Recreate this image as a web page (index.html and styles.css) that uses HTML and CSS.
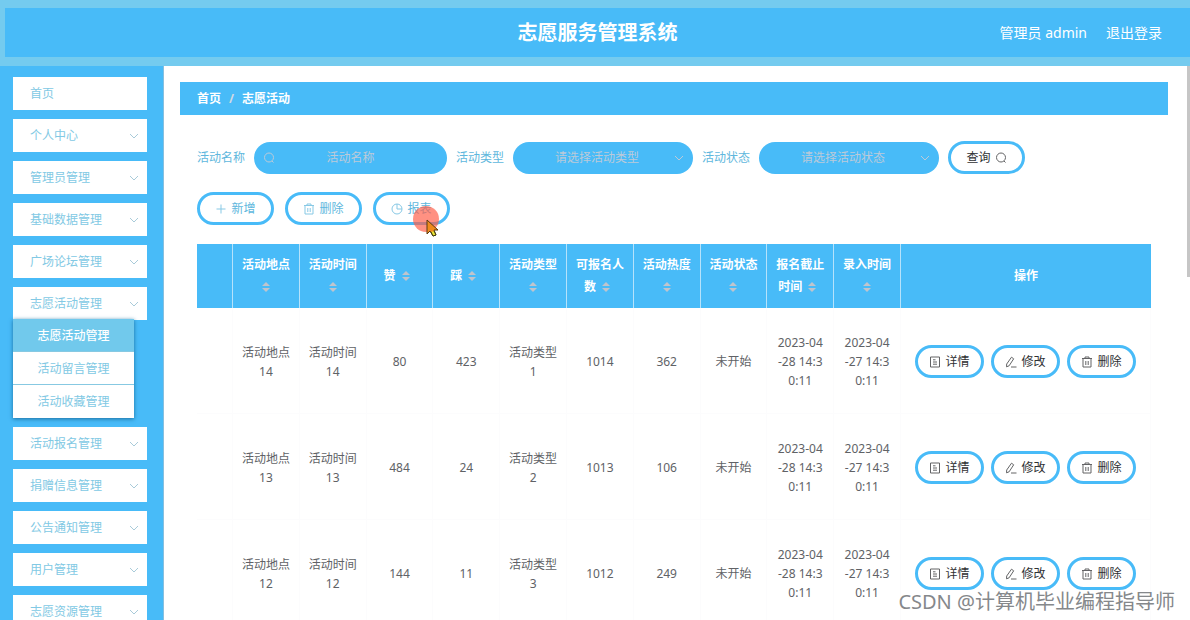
FILE: index.html
```html
<!DOCTYPE html>
<html lang="zh-CN">
<head>
<meta charset="utf-8">
<title>志愿服务管理系统</title>
<link rel="stylesheet" href="styles.css">
</head>
<body>
<svg class="defs" aria-hidden="true">
  <symbol id="search" viewBox="0 0 12 12"><circle cx="6" cy="5.5" r="4.5"/><path d="M9 9l1.500 1.500"/></symbol>
  <symbol id="down" viewBox="0 0 12 12"><path d="M2 4L6 8l4-4"/></symbol>
  <symbol id="plus" viewBox="0 0 12 12"><path d="M6 1.500v9M1.500 6h9"/></symbol>
  <symbol id="trash" viewBox="0 0 12 12"><path d="M1 2.500h10M4 2.500v-1.500h4v1.500M2 2.500v8.500h8V2.500M4.800 5v4M7.200 5v4"/></symbol>
  <symbol id="pie" viewBox="0 0 12 12"><circle cx="6" cy="6" r="5"/><path d="M6 1v5h5"/></symbol>
  <symbol id="doc" viewBox="0 0 12 12"><path d="M1.500 1h9v10h-9zM4 3.800h2.500M4 6h4M4 8.200h4"/></symbol>
  <symbol id="edit" viewBox="0 0 12 12"><path d="M6.500 1.200l2.200 1.600-4.600 7-2.600 1 .2-2.800zM6 11h5.500"/></symbol>
  <symbol id="sort" viewBox="0 0 20 12"><path d="M10 1l4 4H6zM6 7h8l-4 4z"/></symbol>
</svg>

<header class="topbar">
  <h1 class="topbar-title">志愿服务管理系统</h1>
  <div class="topbar-user"><span>管理员 admin</span><a href="#" class="logout">退出登录</a></div>
</header>

<div class="layout">
  <nav class="sidebar">
    <a class="menu-item" href="#">首页</a>
    <button class="menu-item">个人中心<svg class="icon"><use href="#down"/></svg></button>
    <button class="menu-item">管理员管理<svg class="icon"><use href="#down"/></svg></button>
    <button class="menu-item">基础数据管理<svg class="icon"><use href="#down"/></svg></button>
    <button class="menu-item">广场论坛管理<svg class="icon"><use href="#down"/></svg></button>
    <div class="menu-group">
      <button class="menu-item">志愿活动管理<svg class="icon"><use href="#down"/></svg></button>
      <div class="submenu">
        <a class="submenu-item active" href="#">志愿活动管理</a>
        <a class="submenu-item" href="#">活动留言管理</a>
        <a class="submenu-item" href="#">活动收藏管理</a>
      </div>
    </div>
    <button class="menu-item">活动报名管理<svg class="icon"><use href="#down"/></svg></button>
    <button class="menu-item">捐赠信息管理<svg class="icon"><use href="#down"/></svg></button>
    <button class="menu-item">公告通知管理<svg class="icon"><use href="#down"/></svg></button>
    <button class="menu-item">用户管理<svg class="icon"><use href="#down"/></svg></button>
    <button class="menu-item">志愿资源管理<svg class="icon"><use href="#down"/></svg></button>
  </nav>

  <main class="main">
    <div class="breadcrumb"><a href="#">首页</a><span class="slash">/</span><span>志愿活动</span></div>
    <div class="content">
      <form class="filters">
        <label for="name">活动名称</label>
        <div class="field field-text"><svg class="icon"><use href="#search"/></svg><input id="name" type="text" placeholder="活动名称"></div>
        <label for="type">活动类型</label>
        <div class="field"><select id="type"><option>请选择活动类型</option></select><svg class="icon"><use href="#down"/></svg></div>
        <label for="state">活动状态</label>
        <div class="field"><select id="state"><option>请选择活动状态</option></select><svg class="icon"><use href="#down"/></svg></div>
        <button type="button" class="btn dark">查询<svg class="icon"><use href="#search"/></svg></button>
      </form>
      <div class="toolbar">
        <button class="btn"><svg class="icon"><use href="#plus"/></svg>新增</button>
        <button class="btn"><svg class="icon"><use href="#trash"/></svg>删除</button>
        <button class="btn report"><svg class="icon"><use href="#pie"/></svg>报表
          <svg class="pointer" viewBox="0 0 28 32" aria-hidden="true"><circle cx="13" cy="13" r="13" fill="#ff5d47" fill-opacity=".68"/><path d="M14 14v14l3-3 3 5 3-1-2-5h4z" fill="#f08a1c" stroke="#5a3a10"/><path d="M18 26l2 4 3-1-2-4" fill="#e8e337" stroke="#3c3c10"/></svg>
        </button>
      </div>
      <table class="grid">
        <colgroup><col class="col-check"><col span="10"><col class="col-ops"></colgroup>
        <thead>
          <tr>
            <th></th>
            <th>活动地点<svg class="sort"><use href="#sort"/></svg></th>
            <th>活动时间<svg class="sort"><use href="#sort"/></svg></th>
            <th>赞<svg class="sort"><use href="#sort"/></svg></th>
            <th>踩<svg class="sort"><use href="#sort"/></svg></th>
            <th>活动类型<svg class="sort"><use href="#sort"/></svg></th>
            <th>可报名人数<svg class="sort"><use href="#sort"/></svg></th>
            <th>活动热度<svg class="sort"><use href="#sort"/></svg></th>
            <th>活动状态<svg class="sort"><use href="#sort"/></svg></th>
            <th>报名截止时间<svg class="sort"><use href="#sort"/></svg></th>
            <th>录入时间<svg class="sort"><use href="#sort"/></svg></th>
            <th>操作</th>
          </tr>
        </thead>
        <tbody>
          <tr>
            <td></td><td>活动地点14</td><td>活动时间14</td><td>80</td><td>423</td><td>活动类型1</td><td>1014</td><td>362</td><td>未开始</td>
            <td class="date">2023-04-28 14:30:11</td><td class="date">2023-04-27 14:30:11</td>
            <td><div class="ops"><button class="btn dark"><svg class="icon"><use href="#doc"/></svg>详情</button><button class="btn dark"><svg class="icon"><use href="#edit"/></svg>修改</button><button class="btn dark"><svg class="icon"><use href="#trash"/></svg>删除</button></div></td>
          </tr>
          <tr>
            <td></td><td>活动地点13</td><td>活动时间13</td><td>484</td><td>24</td><td>活动类型2</td><td>1013</td><td>106</td><td>未开始</td>
            <td class="date">2023-04-28 14:30:11</td><td class="date">2023-04-27 14:30:11</td>
            <td><div class="ops"><button class="btn dark"><svg class="icon"><use href="#doc"/></svg>详情</button><button class="btn dark"><svg class="icon"><use href="#edit"/></svg>修改</button><button class="btn dark"><svg class="icon"><use href="#trash"/></svg>删除</button></div></td>
          </tr>
          <tr>
            <td></td><td>活动地点12</td><td>活动时间12</td><td>144</td><td>11</td><td>活动类型3</td><td>1012</td><td>249</td><td>未开始</td>
            <td class="date">2023-04-28 14:30:11</td><td class="date">2023-04-27 14:30:11</td>
            <td><div class="ops"><button class="btn dark"><svg class="icon"><use href="#doc"/></svg>详情</button><button class="btn dark"><svg class="icon"><use href="#edit"/></svg>修改</button><button class="btn dark"><svg class="icon"><use href="#trash"/></svg>删除</button></div></td>
          </tr>
        </tbody>
      </table>
    </div>
    <div class="scroll-thumb"></div>
  </main>
</div>
<div class="watermark">CSDN @计算机毕业编程指导师</div>
</body>
</html>
```

FILE: styles.css
```css
:root {
  --blue: #48bbf8;
  --sky: #74cbef;
  --font: "Noto Sans", "Noto Sans CJK SC", sans-serif;
}

* {
  box-sizing: border-box;
}

body {
  margin: 0;
  height: 100vh;
  overflow: hidden;
  display: flex;
  flex-direction: column;
  position: relative;
  font: 12px/19px var(--font);
  color: #606266;
  background: #fff;
}

button,
input,
select {
  font: inherit;
  margin: 0;
}

a {
  color: inherit;
  text-decoration: none;
}

.defs {
  position: absolute;
  width: 0;
  height: 0;
}

.icon {
  width: 12px;
  height: 12px;
  flex: none;
  fill: none;
  stroke: currentColor;
  stroke-width: 1;
}

.topbar {
  flex: none;
  display: grid;
  grid-template-columns: 1fr auto 1fr;
  align-items: center;
  padding: 12px 28px 12px 0;
  border: solid var(--sky);
  border-width: 8px 0 9px 5px;
  background: var(--blue);
  color: #fff;
}

.topbar-title {
  grid-column: 2;
  margin: 0 -28px 0 0;
  font-size: 20px;
  line-height: 25px;
  font-weight: 700;
}

.topbar-user {
  display: flex;
  justify-content: flex-end;
  gap: 19px;
  font-size: 14px;
}

.layout {
  flex: 1;
  min-height: 0;
  display: flex;
}

.sidebar {
  flex: none;
  width: 164px;
  display: flex;
  flex-direction: column;
  gap: 9px;
  padding: 11px 16px 0 13px;
  border-right: 1px solid #86bfdf;
  background: var(--blue);
  overflow: hidden;
}

.menu-item {
  flex: none;
  display: flex;
  align-items: center;
  justify-content: space-between;
  width: 100%;
  height: 33px;
  padding: 0 7px 0 17px;
  border: 0;
  background: #fff;
  color: #82c9e4;
}

.menu-item .icon {
  color: #a9cbd9;
}

.menu-group {
  flex: none;
}

.submenu {
  position: relative;
  width: 121px;
  margin-top: -1px;
  box-shadow: 0 1px 4px #1c6f9f;
}

.submenu-item {
  display: flex;
  align-items: center;
  justify-content: center;
  height: 33px;
  border-bottom: 1px solid #87c9e2;
  background: #fff;
  color: #82c9e4;
}

.submenu-item:last-child {
  border-bottom: 0;
}

.submenu-item.active {
  background: #71c9ec;
  color: #fff;
  font-weight: 500;
}

.main {
  flex: 1;
  min-width: 0;
  position: relative;
  padding: 16px 22px 0 16px;
  overflow: hidden;
}

.scroll-thumb {
  position: absolute;
  top: 0;
  right: 0;
  width: 3px;
  height: 211px;
  background: #c6c6c6;
}

.breadcrumb {
  display: flex;
  align-items: center;
  gap: 8px;
  height: 33px;
  padding: 0 17px;
  background: var(--blue);
  color: #fff;
  font-weight: 700;
}

.slash {
  color: #d3d9e3;
}

.content {
  padding: 26px 17px 0;
}

.filters {
  display: flex;
  align-items: center;
  gap: 9px;
}

.filters label {
  color: #60b7dd;
}

.field {
  position: relative;
  width: 180px;
}

.field-text {
  width: 193px;
}

.field input,
.field select {
  display: block;
  width: 100%;
  height: 32px;
  padding: 0 27px;
  border: 0;
  border-radius: 16px;
  background: var(--blue);
  color: #bccad8;
  text-align: center;
  text-align-last: center;
  appearance: none;
}

.field select {
  padding: 0 25px 0 13px;
}

.field input::placeholder {
  color: #bccad8;
  opacity: 1;
}

.field .icon {
  position: absolute;
  top: 10px;
  right: 8px;
  color: #bccad8;
}

.field-text .icon {
  right: auto;
  left: 9px;
}

.btn {
  display: flex;
  align-items: center;
  justify-content: center;
  gap: 4px;
  width: 77px;
  height: 33px;
  padding: 0;
  border: 3px solid var(--blue);
  border-radius: 17px;
  background: #fff;
  color: #60b7dd;
}

.btn .icon {
  opacity: 0.75;
}

.btn.dark {
  color: #303133;
}

.toolbar {
  display: flex;
  gap: 11px;
  padding: 18px 0 19px;
}

.report {
  position: relative;
}

.pointer {
  position: absolute;
  left: 37px;
  top: 11px;
  width: 28px;
  height: 32px;
}

.grid {
  width: 100%;
  table-layout: fixed;
  border-collapse: separate;
  border-spacing: 0;
  text-align: center;
}

.col-check {
  width: 36px;
}

.col-ops {
  width: 250px;
}

.grid th,
.grid td {
  padding: 0 8px;
  border-right: 1px solid #fcfcfd;
  word-break: break-all;
}

.grid th {
  height: 64px;
  padding-bottom: 1px;
  border-right-color: #b5e2fb;
  background: var(--blue);
  color: #fff;
  line-height: 22px;
  font-weight: 700;
}

.grid th:last-child {
  border-right: 0;
}

.grid td {
  height: 106px;
  padding-top: 2px;
  border-bottom: 1px solid #fcfcfd;
}

.grid td.date {
  padding: 2px 10px 0;
}

.sort {
  width: 20px;
  height: 12px;
  vertical-align: -2px;
  fill: #c0c4cc;
}

.ops {
  display: flex;
  justify-content: center;
  gap: 7px;
}

.ops .btn {
  width: 69px;
}

.watermark {
  position: absolute;
  right: 15px;
  bottom: 4px;
  font-size: 20px;
  line-height: 28px;
  color: #85888b;
  text-shadow: 1px 1px 0 #fff;
}
```
